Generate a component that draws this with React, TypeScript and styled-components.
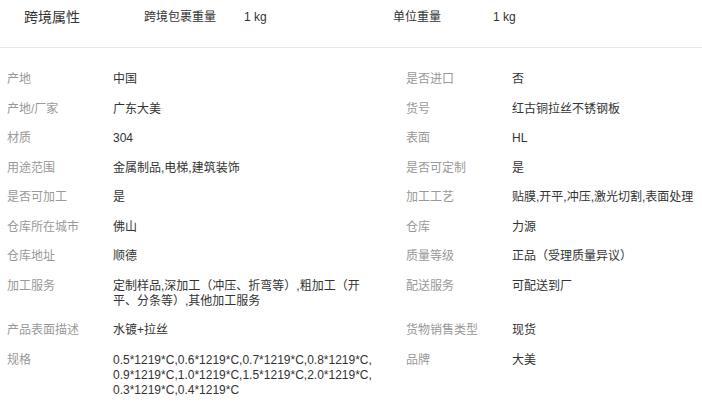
import React from 'react';
import styled, { createGlobalStyle } from 'styled-components';

type FieldTypes = {
  label: string;
  value: string;
};

type RowTypes = {
  left: FieldTypes;
  right: FieldTypes;
};

const GlobalStyle = createGlobalStyle`
  body {
    margin: 0;
    background: #fff;
    font-family: "Liberation Sans", "Noto Sans CJK SC", sans-serif;
    color: #333;
  }
`;

const Wrapp = styled.div`
  width: 702px;
  height: 407px;
  overflow: hidden;
  background: #fff;
`;

const Header = styled.div`
  display: flex;
  align-items: flex-start;
  height: 48px;
  box-sizing: border-box;
  padding: 9px 0 0 24px;
  border-bottom: 1px solid #e8e8e8;
`;

const Title = styled.div`
  width: 120px;
  font-size: 14px;
  line-height: 16px;
  color: #333;
`;

const HeadField = styled.div`
  display: flex;
  width: 249px;
  font-size: 12px;
  line-height: 16px;
  color: #333;
`;

const HeadLabel = styled.span`
  width: 100px;
`;

const Body = styled.div`
  padding: 17px 0 0 7px;
`;

const Row = styled.div`
  display: grid;
  grid-template-columns: 399px 1fr;
`;

const Field = styled.div`
  display: flex;
  align-items: flex-start;
  padding: 7.25px 0;
  font-size: 12px;
  line-height: 15px;
`;

const Label = styled.div`
  width: 106px;
  flex-shrink: 0;
  color: #999;
`;

const Value = styled.div<{ $narrow?: boolean }>`
  width: ${({ $narrow }) => ($narrow ? '260px' : 'auto')};
  color: #333;
  word-break: break-all;
`;

const rows: RowTypes[] = [
  { left: { label: '产地', value: '中国' }, right: { label: '是否进口', value: '否' } },
  { left: { label: '产地/厂家', value: '广东大美' }, right: { label: '货号', value: '红古铜拉丝不锈钢板' } },
  { left: { label: '材质', value: '304' }, right: { label: '表面', value: 'HL' } },
  { left: { label: '用途范围', value: '金属制品,电梯,建筑装饰' }, right: { label: '是否可定制', value: '是' } },
  {
    left: { label: '是否可加工', value: '是' },
    right: { label: '加工工艺', value: '贴膜,开平,冲压,激光切割,表面处理' },
  },
  { left: { label: '仓库所在城市', value: '佛山' }, right: { label: '仓库', value: '力源' } },
  { left: { label: '仓库地址', value: '顺德' }, right: { label: '质量等级', value: '正品（受理质量异议）' } },
  {
    left: { label: '加工服务', value: '定制样品,深加工（冲压、折弯等）,粗加工（开平、分条等）,其他加工服务' },
    right: { label: '配送服务', value: '可配送到厂' },
  },
  { left: { label: '产品表面描述', value: '水镀+拉丝' }, right: { label: '货物销售类型', value: '现货' } },
  {
    left: {
      label: '规格',
      value:
        '0.5*1219*C,0.6*1219*C,0.7*1219*C,0.8*1219*C,0.9*1219*C,1.0*1219*C,1.5*1219*C,2.0*1219*C,0.3*1219*C,0.4*1219*C',
    },
    right: { label: '品牌', value: '大美' },
  },
];

const App: React.FC = () => (
  <Wrapp>
    <GlobalStyle />
    <Header>
      <Title>跨境属性</Title>
      <HeadField>
        <HeadLabel>跨境包裹重量</HeadLabel>
        <span>1 kg</span>
      </HeadField>
      <HeadField>
        <HeadLabel>单位重量</HeadLabel>
        <span>1 kg</span>
      </HeadField>
    </Header>
    <Body>
      {rows.map((row, index) => (
        <Row key={index}>
          <Field>
            <Label>{row.left.label}</Label>
            <Value $narrow>{row.left.value}</Value>
          </Field>
          <Field>
            <Label>{row.right.label}</Label>
            <Value>{row.right.value}</Value>
          </Field>
        </Row>
      ))}
    </Body>
  </Wrapp>
);

export default App;
